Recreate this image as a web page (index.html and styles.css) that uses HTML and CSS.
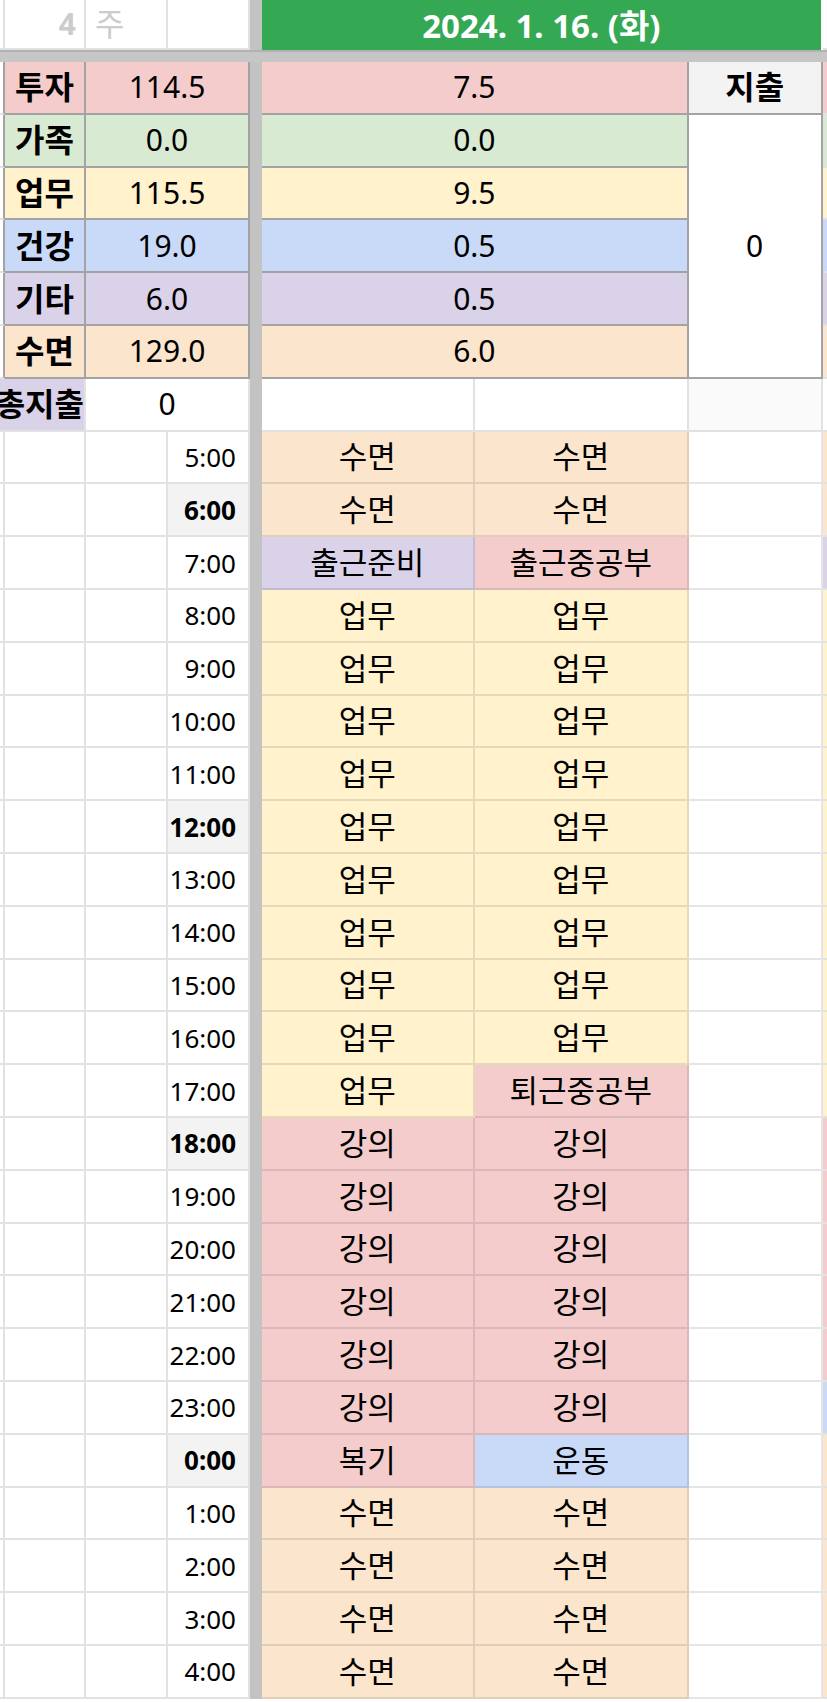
FILE: index.html
```html
<!DOCTYPE html>
<html lang="ko">
<head>
<meta charset="utf-8">
<title>시간 기록</title>
<link rel="stylesheet" href="styles.css">
</head>
<body>
<div class="sheet">
  <div class="vdiv"></div>
  <div class="hband"></div>
  <div class="merged-spend t">0</div>

  <!-- header row -->
  <div class="c"></div>
  <div class="c hdr-num">4</div>
  <div class="c hdr-wk">주</div>
  <div class="c"></div>
  <div class="c date">2024. 1. 16. (화)</div>
  <div class="c edge"></div>

  <!-- summary rows -->
  <div class="c t first"></div>
  <div class="c t lbl red">투자</div>
  <div class="c t val red">114.5</div>
  <div class="c t day red">7.5</div>
  <div class="c t spend-h">지출</div>
  <div class="c edge red"></div>

  <div class="c t first"></div>
  <div class="c t lbl grn">가족</div>
  <div class="c t val grn">0.0</div>
  <div class="c t day grn">0.0</div>
  <div class="c edge grn"></div>

  <div class="c t first"></div>
  <div class="c t lbl yel">업무</div>
  <div class="c t val yel">115.5</div>
  <div class="c t day yel">9.5</div>
  <div class="c edge yel"></div>

  <div class="c t first"></div>
  <div class="c t lbl blu">건강</div>
  <div class="c t val blu">19.0</div>
  <div class="c t day blu">0.5</div>
  <div class="c edge blu"></div>

  <div class="c t first"></div>
  <div class="c t lbl pur">기타</div>
  <div class="c t val pur">6.0</div>
  <div class="c t day pur">0.5</div>
  <div class="c edge pur"></div>

  <div class="c t first"></div>
  <div class="c t lbl org">수면</div>
  <div class="c t val org">129.0</div>
  <div class="c t day org">6.0</div>
  <div class="c edge org"></div>

  <!-- total spend row -->
  <div class="c total pur">총지출</div>
  <div class="c val">0</div>
  <div class="c"></div>
  <div class="c"></div>
  <div class="c faint"></div>
  <div class="c edge"></div>

  <!-- timeline -->
  <div class="c"></div><div class="c"></div><div class="c"></div><div class="c time">5:00</div><div class="c tl org">수면</div><div class="c tl org">수면</div><div class="c tl"></div><div class="c edge org"></div>
  <div class="c"></div><div class="c"></div><div class="c"></div><div class="c time b">6:00</div><div class="c tl org">수면</div><div class="c tl org">수면</div><div class="c tl"></div><div class="c edge org"></div>
  <div class="c"></div><div class="c"></div><div class="c"></div><div class="c time">7:00</div><div class="c tl pur">출근준비</div><div class="c tl red">출근중공부</div><div class="c tl"></div><div class="c edge pur"></div>
  <div class="c"></div><div class="c"></div><div class="c"></div><div class="c time">8:00</div><div class="c tl yel">업무</div><div class="c tl yel">업무</div><div class="c tl"></div><div class="c edge yel"></div>
  <div class="c"></div><div class="c"></div><div class="c"></div><div class="c time">9:00</div><div class="c tl yel">업무</div><div class="c tl yel">업무</div><div class="c tl"></div><div class="c edge yel"></div>
  <div class="c"></div><div class="c"></div><div class="c"></div><div class="c time">10:00</div><div class="c tl yel">업무</div><div class="c tl yel">업무</div><div class="c tl"></div><div class="c edge yel"></div>
  <div class="c"></div><div class="c"></div><div class="c"></div><div class="c time">11:00</div><div class="c tl yel">업무</div><div class="c tl yel">업무</div><div class="c tl"></div><div class="c edge yel"></div>
  <div class="c"></div><div class="c"></div><div class="c"></div><div class="c time b">12:00</div><div class="c tl yel">업무</div><div class="c tl yel">업무</div><div class="c tl"></div><div class="c edge yel"></div>
  <div class="c"></div><div class="c"></div><div class="c"></div><div class="c time">13:00</div><div class="c tl yel">업무</div><div class="c tl yel">업무</div><div class="c tl"></div><div class="c edge yel"></div>
  <div class="c"></div><div class="c"></div><div class="c"></div><div class="c time">14:00</div><div class="c tl yel">업무</div><div class="c tl yel">업무</div><div class="c tl"></div><div class="c edge yel"></div>
  <div class="c"></div><div class="c"></div><div class="c"></div><div class="c time">15:00</div><div class="c tl yel">업무</div><div class="c tl yel">업무</div><div class="c tl"></div><div class="c edge yel"></div>
  <div class="c"></div><div class="c"></div><div class="c"></div><div class="c time">16:00</div><div class="c tl yel">업무</div><div class="c tl yel">업무</div><div class="c tl"></div><div class="c edge yel"></div>
  <div class="c"></div><div class="c"></div><div class="c"></div><div class="c time">17:00</div><div class="c tl yel">업무</div><div class="c tl red">퇴근중공부</div><div class="c tl"></div><div class="c edge yel"></div>
  <div class="c"></div><div class="c"></div><div class="c"></div><div class="c time b">18:00</div><div class="c tl red">강의</div><div class="c tl red">강의</div><div class="c tl"></div><div class="c edge red"></div>
  <div class="c"></div><div class="c"></div><div class="c"></div><div class="c time">19:00</div><div class="c tl red">강의</div><div class="c tl red">강의</div><div class="c tl"></div><div class="c edge red"></div>
  <div class="c"></div><div class="c"></div><div class="c"></div><div class="c time">20:00</div><div class="c tl red">강의</div><div class="c tl red">강의</div><div class="c tl"></div><div class="c edge red"></div>
  <div class="c"></div><div class="c"></div><div class="c"></div><div class="c time">21:00</div><div class="c tl red">강의</div><div class="c tl red">강의</div><div class="c tl"></div><div class="c edge red"></div>
  <div class="c"></div><div class="c"></div><div class="c"></div><div class="c time">22:00</div><div class="c tl red">강의</div><div class="c tl red">강의</div><div class="c tl"></div><div class="c edge red"></div>
  <div class="c"></div><div class="c"></div><div class="c"></div><div class="c time">23:00</div><div class="c tl red">강의</div><div class="c tl red">강의</div><div class="c tl"></div><div class="c edge blu"></div>
  <div class="c"></div><div class="c"></div><div class="c"></div><div class="c time b">0:00</div><div class="c tl red">복기</div><div class="c tl blu">운동</div><div class="c tl"></div><div class="c edge org"></div>
  <div class="c"></div><div class="c"></div><div class="c"></div><div class="c time">1:00</div><div class="c tl org">수면</div><div class="c tl org">수면</div><div class="c tl"></div><div class="c edge org"></div>
  <div class="c"></div><div class="c"></div><div class="c"></div><div class="c time">2:00</div><div class="c tl org">수면</div><div class="c tl org">수면</div><div class="c tl"></div><div class="c edge org"></div>
  <div class="c"></div><div class="c"></div><div class="c"></div><div class="c time">3:00</div><div class="c tl org">수면</div><div class="c tl org">수면</div><div class="c tl"></div><div class="c edge org"></div>
  <div class="c"></div><div class="c"></div><div class="c"></div><div class="c time">4:00</div><div class="c tl org">수면</div><div class="c tl org">수면</div><div class="c tl"></div><div class="c edge org"></div>
</div>
</body>
</html>
```

FILE: styles.css
```css
* {
  box-sizing: border-box;
}

body {
  margin: 0;
  background: #ffffff;
  color: #000000;
  font-family: "Noto Sans", "Noto Sans CJK KR", sans-serif;
  font-size: 30px;
}

.sheet {
  display: grid;
  grid-template-columns: 5px 81px 82px 82px 12px 212.7px 214px 134px 1fr;
  grid-template-rows: 50px 12px repeat(31, 52.8px);
  width: 827px;
  height: 1702px;
  overflow: hidden;
}

.vdiv {
  grid-column: 5;
  grid-row: 1 / -1;
  background: #c3c3c3;
}

.hband {
  grid-column: 1 / -1;
  grid-row: 2;
  background: #c6c6c6;
  border-top: 2px solid #b2b2b2;
}

.c {
  display: flex;
  align-items: center;
  justify-content: center;
  min-width: 0;
  overflow: hidden;
  white-space: nowrap;
  line-height: 1;
  border-right: 2px solid #e2e2e2;
  border-bottom: 2px solid #e2e2e2;
}

/* header row */
.hdr-num {
  justify-content: flex-end;
  padding-right: 8px;
  color: #cccccc;
  font-weight: 700;
}

.hdr-wk {
  justify-content: flex-start;
  padding-left: 9px;
  color: #cccccc;
  font-size: 32px;
}

.date {
  grid-column: span 3;
  background: #34a853;
  color: #ffffff;
  font-weight: 700;
  font-size: 33px;
  border-bottom: none;
  border-right-color: #ffffff;
}

.edge {
  border-right: none;
}

/* summary section */
.t {
  border-color: #a3a3a3;
}

.first {
  border-bottom-color: #e2e2e2;
}

.lbl {
  font-weight: 700;
  font-size: 32px;
}

.val {
  grid-column: span 2;
}

.day {
  grid-column: span 2;
}

.spend-h {
  background: #f3f3f3;
  font-weight: 700;
  font-size: 32px;
}

.merged-spend {
  grid-column: 8;
  grid-row: 4 / 9;
  display: flex;
  align-items: center;
  justify-content: center;
  line-height: 1;
  background: #ffffff;
  border-right: 2px solid #a3a3a3;
  border-bottom: 2px solid #a3a3a3;
}

.total {
  grid-column: span 2;
  justify-content: flex-end;
  font-weight: 700;
  font-size: 32px;
  padding-right: 0;
}

.faint {
  background: #fafafa;
}

/* timeline */
.time {
  justify-content: flex-end;
  padding-right: 12px;
  font-size: 26px;
}

.time.b {
  font-weight: 700;
  background: #f3f3f3;
}

.tl {
  border-color: rgba(0, 0, 0, 0.1);
  font-size: 31px;
}

/* palette */
.red { background: #f4cccc; }
.grn { background: #d9ead3; }
.yel { background: #fff2cc; }
.blu { background: #c9daf8; }
.pur { background: #d9d2e9; }
.org { background: #fce5cd; }
```
